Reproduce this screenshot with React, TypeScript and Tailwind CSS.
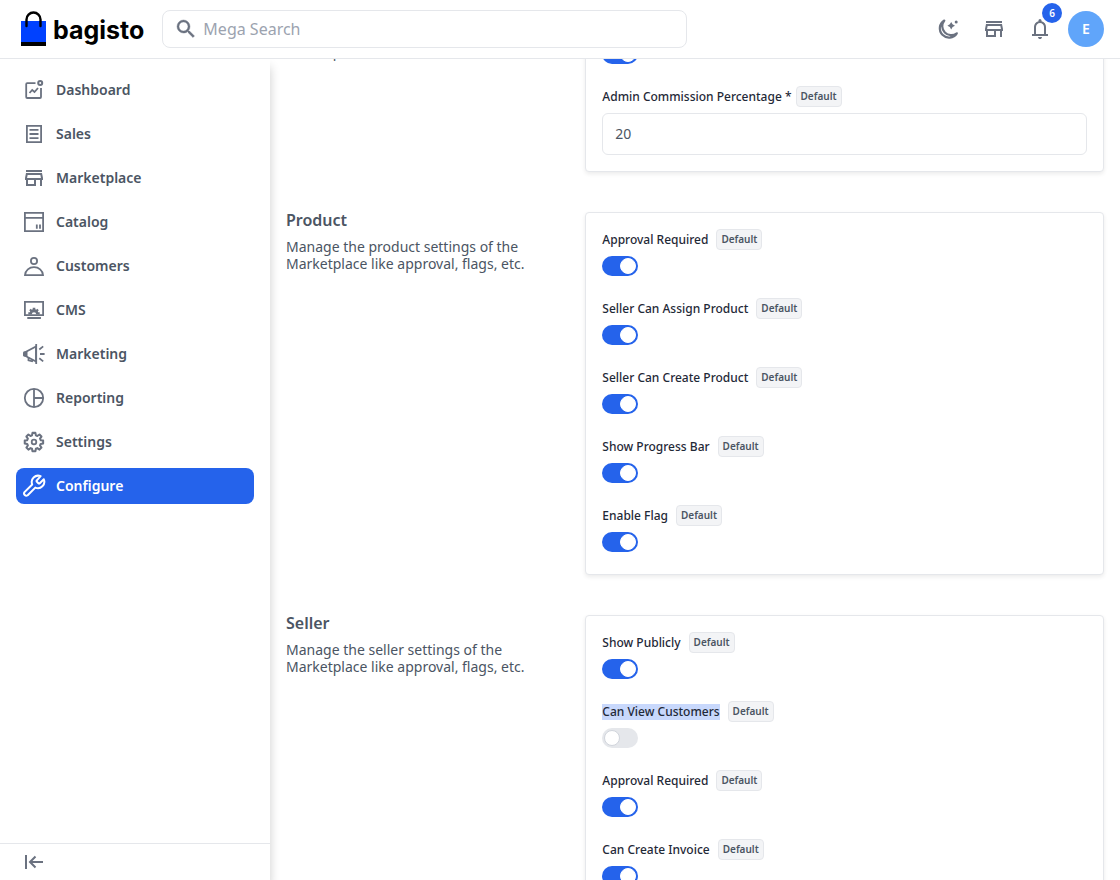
import React, { useLayoutEffect, useRef, useState } from 'react';
import clsx from 'clsx';

type IconProps = { className?: string };

const Svg = ({ className, children }: IconProps & { children: React.ReactNode }) => (
  <svg
    viewBox="0 0 24 24"
    className={clsx('h-6 w-6 shrink-0', className)}
    fill="none"
    stroke="currentColor"
    strokeWidth={1.8}
    aria-hidden="true"
  >
    {children}
  </svg>
);

const DashboardIcon = () => (
  <Svg>
    <path d="M13.500 5.200H5.200a1 1 0 0 0-1 1V19a1 1 0 0 0 1 1H18a1 1 0 0 0 1-1v-9" />
    <path d="M7.500 15l2.700-3 2.300 2 3.500-4" />
    <circle cx="18.200" cy="5" r="2" strokeWidth="2" />
  </Svg>
);

const SalesIcon = () => (
  <Svg>
    <path d="M4.900 3.900h14.200v16.200H4.900zM7.500 7.900h9M7.500 12h9M7.500 16.100h9" />
  </Svg>
);

const StoreIcon = () => (
  <Svg>
    <path
      fill="currentColor"
      stroke="none"
      d="M18.36 9l.6 3H5.04l.6-3h12.72M20 4H4v2h16V4zm0 3H4l-1 5v2h1v6h10v-6h4v6h2v-6h1v-2l-1-5zM6 18v-4h6v4H6z"
    />
  </Svg>
);

const CatalogIcon = () => (
  <Svg>
    <path d="M2.900 2.900h18.200v18.200H2.900zM3 7.900h18M14.800 14.600v4.200M18 14.600v4.200" />
  </Svg>
);

const CustomersIcon = () => (
  <Svg>
    <circle cx="12" cy="7" r="3.100" />
    <path d="M3 21.100c.4-4.600 4.200-7.900 9-7.900s8.600 3.300 9 7.900z" />
  </Svg>
);

const CmsIcon = () => (
  <Svg>
    <path d="M2.900 3.900h18.200v13.300H2.900zM5.300 20h13.600" />
    <path
      fill="currentColor"
      stroke="none"
      d="M6.300 16.500v-2.300h1.500l.4-.9-1-1.100 1.500-1.500 1.100 1 .9-.4V9.800h2.600v1.500l.9.4 1.100-1 1.500 1.500-1 1.100.4.9h1.500v2.300h-3.500a2.200 2.200 0 0 0-4.400 0z"
    />
  </Svg>
);

const MarketingIcon = () => (
  <Svg>
    <path d="M4 9.800L14 4.500v15L4 14.200z" />
    <path d="M14.200 2v20" />
    <path fill="currentColor" stroke="none" d="M1 10.300l1-1h3.500v5.400H2l-1-1z" />
    <path d="M6.500 15.500v2.800l3.600 1 .8-1.500" />
    <path d="M17.300 7.500l3.900-3.100M18 12h4.600M17.300 16.300l3.900 3.100" />
  </Svg>
);

const ReportingIcon = () => (
  <Svg>
    <circle cx="12" cy="12" r="9.200" />
    <path d="M12 3v18M12 12h9" />
  </Svg>
);

const SettingsIcon = () => (
  <Svg>
    <path
      strokeLinejoin="round"
      strokeWidth="2.200"
      d="M10.400 2.900h3.200l.5 2.700 1.600.7 2.300-1.600 2.200 2.200-1.600 2.300.7 1.600 2.700.5v3.200l-2.700.5-.7 1.600 1.600 2.300-2.200 2.200-2.300-1.600-1.600.7-.5 2.700h-3.200l-.5-2.700-1.600-.7L6 21.100l-2.200-2.200 1.600-2.300-.7-1.600-2.700-.5v-3.200l2.700-.5.7-1.600L3.800 6.900 6 4.700l2.300 1.600 1.600-.7z"
      transform="translate(.9 .2) scale(.92)"
    />
    <circle cx="12" cy="12" r="2.300" />
  </Svg>
);

const ConfigureIcon = () => (
  <Svg>
    <path
      strokeLinejoin="round"
      strokeWidth="2"
      d="M14.900 6.300a1 1 0 0 0 0 1.400l1.500 1.500a1 1 0 0 0 1.400 0l4-3.900a6.400 6.400 0 0 1-8.500 8.300l-7.600 7.700a2.300 2.300 0 0 1-3.200-3.200l7.700-7.600a6.400 6.400 0 0 1 8.400-8.300z"
    />
  </Svg>
);

const MoonIcon = () => (
  <Svg>
    <path
      strokeLinejoin="round"
      strokeWidth="2.200"
      d="M8.300 3.500a9.200 9.200 0 1 0 12.500 12.800A9 9 0 0 1 8.300 3.500z"
    />
    <path fill="currentColor" stroke="none" d="M15.200 4.900l1.400 2.400 2.400 1.400-2.400 1.400-1.400 2.400-1.400-2.400-2.400-1.400 2.400-1.400z" />
    <circle cx="20.200" cy="5" r="1.500" fill="currentColor" stroke="none" />
  </Svg>
);

const BellIcon = () => (
  <Svg>
    <path
      fill="currentColor"
      stroke="none"
      d="M4 19v-2h2v-7q0-2.075 1.250-3.687T10.500 4.200v-.7q0-.625.438-1.062T12 2t1.063.438T13.500 3.500v.7q2 .5 3.250 2.113T18 10v7h2v2zm8 3q-.825 0-1.412-.587T10 20h4q0 .825-.587 1.413T12 22m-4-5h8v-7q0-1.650-1.175-2.825T12 6T9.175 7.175T8 10z"
    />
  </Svg>
);

const SearchIcon = ({ className }: IconProps) => (
  <Svg className={className}>
    <path
      fill="currentColor"
      stroke="currentColor"
      strokeWidth=".4"
      d="M15.500 14h-.79l-.28-.27A6.470 6.470 0 0 0 16 9.500 6.500 6.500 0 1 0 9.500 16c1.610 0 3.090-.59 4.230-1.570l.27.28v.79l5 4.990L20.490 19l-4.990-5zm-6 0C7.010 14 5 11.990 5 9.500S7.010 5 9.500 5 14 7.010 14 9.500 11.990 14 9.500 14z"
    />
  </Svg>
);

const CollapseIcon = () => (
  <Svg>
    <path strokeWidth="2" d="M4 5v14M21 12H8.500M13.500 6.500L8 12l5.500 5.500" />
  </Svg>
);

const menu = [
  { label: 'Dashboard', icon: DashboardIcon },
  { label: 'Sales', icon: SalesIcon },
  { label: 'Marketplace', icon: StoreIcon },
  { label: 'Catalog', icon: CatalogIcon },
  { label: 'Customers', icon: CustomersIcon },
  { label: 'CMS', icon: CmsIcon },
  { label: 'Marketing', icon: MarketingIcon },
  { label: 'Reporting', icon: ReportingIcon },
  { label: 'Settings', icon: SettingsIcon },
  { label: 'Configure', icon: ConfigureIcon, active: true },
];

type Field = {
  id: string;
  label: string;
  type?: 'text';
  value?: string;
  off?: boolean;
  selected?: boolean;
};

type SettingsGroup = { title: string; info: string; fields: Field[] };

const groups: SettingsGroup[] = [
  {
    title: 'Commission',
    info: 'Manage the admin settings of the Marketplace commission.',
    fields: [
      { id: 'commission-enabled', label: 'Enable Commission' },
      { id: 'commission-percentage', label: 'Admin Commission Percentage *', type: 'text', value: '20' },
    ],
  },
  {
    title: 'Product',
    info: 'Manage the product settings of the Marketplace like approval, flags, etc.',
    fields: [
      { id: 'product-approval', label: 'Approval Required' },
      { id: 'product-assign', label: 'Seller Can Assign Product' },
      { id: 'product-create', label: 'Seller Can Create Product' },
      { id: 'product-progress', label: 'Show Progress Bar' },
      { id: 'product-flag', label: 'Enable Flag' },
    ],
  },
  {
    title: 'Seller',
    info: 'Manage the seller settings of the Marketplace like approval, flags, etc.',
    fields: [
      { id: 'seller-public', label: 'Show Publicly' },
      { id: 'seller-customers', label: 'Can View Customers', off: true, selected: true },
      { id: 'seller-approval', label: 'Approval Required' },
      { id: 'seller-invoice', label: 'Can Create Invoice' },
      { id: 'seller-shipment', label: 'Can Create Shipment' },
    ],
  },
];

const Toggle = ({ id, on }: { id: string; on: boolean }) => {
  const [checked, setChecked] = useState(on);

  return (
    <input
      id={id}
      type="checkbox"
      checked={checked}
      onChange={(e) => setChecked(e.target.checked)}
      className="flex h-5 w-9 cursor-pointer appearance-none items-center rounded-full bg-gray-200 px-0.5 after:h-4 after:w-4 after:rounded-full after:border after:border-gray-300 after:bg-white checked:bg-[#2563eb] checked:after:translate-x-full checked:after:border-white"
    />
  );
};

const FieldRow = ({ field }: { field: Field }) => (
  <div className={clsx('flex flex-col items-start gap-1.5', field.type !== 'text' && 'pb-1.5')}>
    <div className={clsx('flex items-center', field.type === 'text' ? 'gap-1' : 'gap-2')}>
      <label
        htmlFor={field.id}
        className={clsx('text-xs leading-4 font-medium text-[#1f2937]', field.selected && 'bg-[#c8d8fc]')}
      >
        {field.label}
      </label>
      <span className="rounded border border-gray-200 bg-gray-100 px-1 text-[10px] leading-[19px] font-semibold text-[#4b5563]">
        Default
      </span>
    </div>
    {field.type === 'text' ? (
      <input
        id={field.id}
        type="text"
        defaultValue={field.value}
        className="w-full rounded-md border border-gray-200 px-3 py-2.5 text-sm leading-5 text-[#4b5563]"
      />
    ) : (
      <Toggle id={field.id} on={!field.off} />
    )}
  </div>
);

const Header = () => (
  <header className="z-20 flex shrink-0 items-center justify-between border-b border-gray-200 bg-white px-4 py-2.5">
    <div className="flex flex-1 items-center gap-[18px]">
      <a href="#dashboard" className="flex items-center gap-1.5 pl-[5px] text-black">
        <svg viewBox="0 0 26 36" className="h-9 w-[26px]" aria-hidden="true">
          <path d="M0 10h25v22H0z" fill="#0041ff" />
          <path d="M0 31h25v4H0z" fill="#000" />
          <path
            d="M5.500 15V8.500a7 7 0 0 1 14 0V15"
            fill="none"
            stroke="#000"
            strokeWidth="2.400"
            strokeLinecap="round"
          />
        </svg>
        <span className="pt-0.5 font-[Inter,sans-serif] text-[25px] leading-9 font-bold">bagisto</span>
      </a>
      <form className="flex h-[38px] w-full max-w-[525px] items-center gap-[5px] rounded-lg border border-gray-200 px-[11px]">
        <SearchIcon className="text-[#6b7280]" />
        <input
          type="text"
          aria-label="Mega Search"
          placeholder="Mega Search"
          className="w-full bg-transparent text-base leading-6 text-[#4b5563] outline-none placeholder:text-[#9ca3af]"
        />
      </form>
    </div>
    <div className="flex items-center gap-2.5 text-[#6b7280]">
      <button type="button" aria-label="Dark mode" className="p-1.5">
        <MoonIcon />
      </button>
      <a href="#store" aria-label="Visit shop" className="p-1.5">
        <StoreIcon />
      </a>
      <button type="button" aria-label="Notifications" className="relative p-1.5">
        <BellIcon />
        <span className="absolute -top-2 -right-1 flex h-5 min-w-5 items-center justify-center rounded-full bg-[#2563eb] text-[10px] font-semibold text-white">
          6
        </span>
      </button>
      <button
        type="button"
        aria-label="Account"
        className="h-9 w-9 rounded-full bg-[#60a5fa] text-sm font-semibold text-white"
      >
        E
      </button>
    </div>
  </header>
);

const Sidebar = () => (
  <aside className="z-10 flex w-[270px] shrink-0 flex-col justify-between bg-white shadow-[0_8px_10px_0_rgba(0,0,0,0.2)]">
    <nav className="flex flex-col gap-2 px-4 pt-[13px]">
      {menu.map(({ label, icon: Icon, active }) => (
        <a
          key={label}
          href={`#${label.toLowerCase()}`}
          className={clsx(
            'flex items-center gap-2.5 rounded-lg p-1.5',
            active ? 'bg-[#2563eb] text-white' : 'text-[#6b7280]'
          )}
        >
          <Icon />
          <span className={clsx('text-sm font-semibold', active ? 'text-white' : 'text-[#4b5563]')}>{label}</span>
        </a>
      ))}
    </nav>
    <div className="border-t border-gray-200 px-4">
      <button type="button" aria-label="Collapse menu" className="block p-1.5 text-[#6b7280]">
        <CollapseIcon />
      </button>
    </div>
  </aside>
);

export default function App() {
  const mainRef = useRef<HTMLElement>(null);

  // Open the page at the commission percentage field
  useLayoutEffect(() => {
    if (mainRef.current) mainRef.current.scrollTop = 75;
  }, []);

  return (
    <div className="flex h-screen flex-col bg-white font-['Noto_Sans',sans-serif]">
      <Header />
      <div className="flex min-h-0 flex-1">
        <Sidebar />
        <main
          ref={mainRef}
          className="flex flex-1 flex-col gap-10 overflow-y-auto p-4 [scrollbar-width:none]"
        >
          {groups.map((group) => (
            <section key={group.title} className="grid shrink-0 grid-cols-[1fr_2fr] gap-10">
              <div>
                <h2 className="text-base leading-4 font-semibold text-[#4b5563]">{group.title}</h2>
                <p className="mt-2.5 text-sm leading-[17px] text-[#4b5563]">{group.info}</p>
              </div>
              <div className="flex flex-col gap-4 rounded border border-gray-200 bg-white p-4 shadow-[0_2px_4px_0_rgba(0,0,0,0.08)]">
                {group.fields.map((field) => (
                  <FieldRow key={field.id} field={field} />
                ))}
              </div>
            </section>
          ))}
        </main>
      </div>
    </div>
  );
}
